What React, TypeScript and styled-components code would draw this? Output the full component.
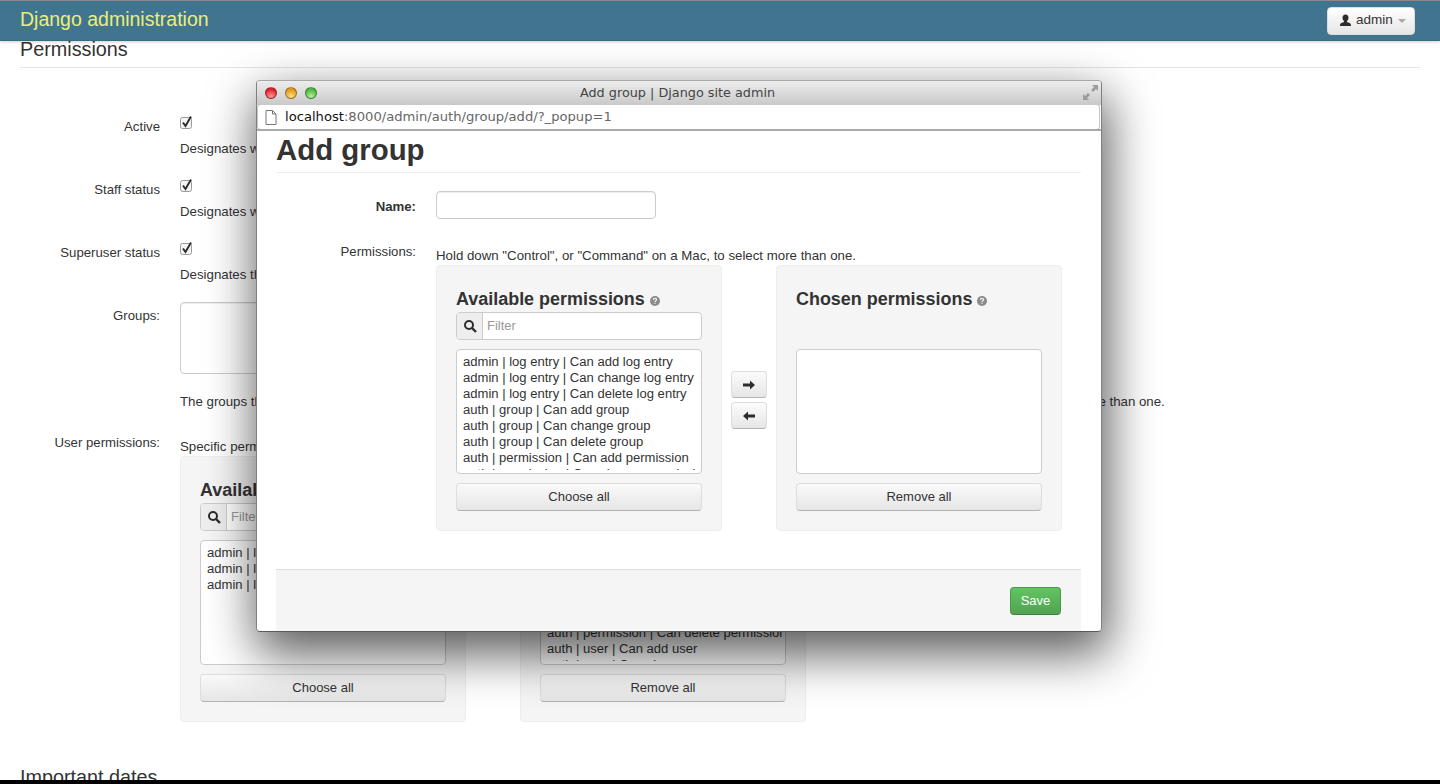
import {FC} from 'react'
import styled, {createGlobalStyle} from 'styled-components'

const GlobalStyle = createGlobalStyle`
  html, body {
    margin: 0;
    padding: 0;
    overflow: hidden;
    background: #fff;
  }
  * {
    box-sizing: border-box;
  }
`

const Viewport = styled.div`
  position: relative;
  width: 1440px;
  height: 784px;
  display: grid;
  grid-template-rows: 41px 1fr 4px;
  overflow: hidden;
  font-family: 'Liberation Sans', Arial, sans-serif;
  font-size: 13px;
  line-height: 20px;
  color: #333;
  background: #fff;
`

const TopBar = styled.header`
  position: relative;
  z-index: 2;
  display: flex;
  align-items: center;
  justify-content: space-between;
  padding: 0 25px 0 20px;
  background: #41758f;
  border-top: 1px solid #8a8a8a;
  border-bottom: 1px solid #3a6a82;
  box-shadow: 0 1px 3px rgba(0, 0, 0, 0.2);
`

const Brand = styled.div`
  font-size: 19.5px;
  line-height: 36px;
  padding-bottom: 4px;
  color: #e9ef78;
`

const UserButton = styled.div`
  display: flex;
  align-items: center;
  gap: 4px;
  width: 88px;
  height: 28px;
  padding: 0 0 1px 11px;
  font-size: 13.5px;
  color: #333;
  border-radius: 4px;
  border: 1px solid #d8dde0;
  background: linear-gradient(#fff, #e6e6e6);
`

const Caret = styled.span`
  width: 0;
  height: 0;
  margin: 2px 0 0 1px;
  border-left: 4px solid transparent;
  border-right: 4px solid transparent;
  border-top: 4px solid #aaa;
`

const Content = styled.main`
  padding: 0 20px;
  overflow: hidden;
`

const Legend = styled.div`
  font-size: 19.8px;
  line-height: 16px;
  padding-bottom: 10px;
  border-bottom: 1px solid #e5e5e5;
  color: #333;
`

const Form = styled.div`
  display: flex;
  flex-direction: column;
  gap: 17px;
  margin-top: 45px;
`

const Row = styled.div`
  display: grid;
  grid-template-columns: 140px 1fr;
  column-gap: 20px;
`

const Label = styled.div<{$bold?: boolean; $pad?: number}>`
  text-align: right;
  font-size: 13.2px;
  padding-top: ${p => p.$pad ?? 4}px;
  font-weight: ${p => (p.$bold ? 700 : 400)};
`

const Check = styled.div`
  height: 24px;
  padding-top: 2px;
`

const Help = styled.div<{$pad?: number; $tight?: boolean}>`
  font-size: 13.28px;
  padding-top: ${p => p.$pad ?? 2}px;
  margin-bottom: ${p => (p.$tight ? -1 : 0)}px;
  white-space: nowrap;
`

const MultiBox = styled.div`
  width: 220px;
  height: 72px;
  background: #fff;
  border: 1px solid #ccc;
  border-radius: 4px;
  box-shadow: inset 0 1px 1px rgba(0, 0, 0, 0.075);
`

const Selector = styled.div`
  display: flex;
`

const PanelBox = styled.section`
  width: 286px;
  height: 266px;
  padding: 0 19px;
  background: #f5f5f5;
  border: 1px solid #eee;
  border-radius: 4px;
`

const PanelTitle = styled.h3`
  display: flex;
  align-items: center;
  gap: 5px;
  margin: 0;
  height: 46px;
  padding-top: 20px;
  font-size: 17.95px;
  line-height: 26px;
  font-weight: 700;
  color: #333;

  svg {
    margin-top: 3px;
  }
`

const FilterSlot = styled.div`
  height: 28px;
  margin-bottom: 9px;
`

const FilterGroup = styled.div`
  display: flex;
  height: 28px;
  border: 1px solid #ccc;
  border-radius: 4px;
  background: #fff;
  overflow: hidden;
`

const FilterAddon = styled.div`
  display: flex;
  align-items: center;
  justify-content: center;
  width: 26px;
  background: #eee;
  border-right: 1px solid #ccc;
`

const FilterText = styled.div`
  padding-left: 4px;
  line-height: 25px;
  color: #999;
`

const ListBox = styled.div`
  width: 246px;
  height: 125px;
  padding: 4px 3px 3px 6px;
  background: #fff;
  border: 1px solid #ccc;
  border-radius: 4px;
`

const ListInner = styled.div`
  height: 100%;
  overflow: hidden;
`

const ListItem = styled.div`
  font-size: 13.05px;
  line-height: 16px;
  white-space: nowrap;
`

const WideButton = styled.div`
  display: flex;
  align-items: center;
  justify-content: center;
  width: 246px;
  height: 28px;
  margin-top: 9px;
  color: #333;
  background: linear-gradient(#fafafa, #e6e6e6);
  border: 1px solid #ddd;
  border-bottom-color: #b3b3b3;
  border-radius: 4px;
`

const Transfer = styled.div`
  display: flex;
  flex-direction: column;
  align-items: center;
  justify-content: center;
  gap: 4px;
  width: 54px;
  padding-top: 4px;
`

const ArrowButton = styled.div`
  display: flex;
  align-items: center;
  justify-content: center;
  width: 36px;
  height: 27px;
  background: linear-gradient(#fcfcfc, #e6e6e6);
  border: 1px solid #ddd;
  border-bottom-color: #b3b3b3;
  border-radius: 4px;
`

const NextSection = styled(Legend)`
  margin-top: 47px;
`

const BottomEdge = styled.div`
  background: #000;
`

const Popup = styled.div`
  position: absolute;
  z-index: 3;
  left: 256px;
  top: 80px;
  width: 846px;
  height: 552px;
  display: flex;
  flex-direction: column;
  background: #fff;
  border: 1px solid #808080;
  border-top-color: #a8a8a8;
  border-bottom-color: #5a5a5a;
  border-radius: 4px;
  overflow: hidden;
`

const PopupShadow = styled.div`
  position: absolute;
  z-index: 3;
  left: 256px;
  top: 80px;
  width: 846px;
  height: 552px;
  border-radius: 4px;
  box-shadow: 3px 18px 48px 2px rgba(0, 0, 0, 0.62), 4px 26px 60px rgba(0, 0, 0, 0.08);
`

const TitleBar = styled.div`
  position: relative;
  flex: none;
  display: flex;
  align-items: center;
  justify-content: center;
  height: 24px;
  padding: 0 3px 1px 0;
  font-family: 'DejaVu Sans', sans-serif;
  font-size: 12.8px;
  color: #444;
  background: linear-gradient(#ededed, #c9c9c9);
`

const Lights = styled.div`
  position: absolute;
  left: 8px;
  top: 6px;
  display: flex;
  gap: 8px;
`

const Light = styled.span<{$hue: string; $glow: string}>`
  width: 12px;
  height: 12px;
  border-radius: 50%;
  border: 1px solid rgba(0, 0, 0, 0.35);
  background: radial-gradient(circle at 50% 85%, ${p => p.$glow}, ${p => p.$hue} 70%);
`

const ExpandIcon = styled.svg`
  position: absolute;
  right: 3px;
  top: 4px;
`

const UrlBar = styled.div`
  flex: none;
  display: flex;
  align-items: center;
  gap: 8px;
  height: 24px;
  margin: 0 2px 0 1px;
  padding-left: 7px;
  font-family: 'DejaVu Sans', sans-serif;
  font-size: 13.14px;
  color: #666;
  background: #fff;
  border-radius: 3px;
  box-shadow: 0 0 0 1px #c4c4c4;
`

const Host = styled.span`
  color: #111;
`

const UrlEdge = styled.div`
  flex: none;
  height: 2px;
  background: #a9a9a9;
`

const PopupBody = styled.div`
  flex: 1;
  display: flex;
  flex-direction: column;
  padding: 0 20px 0 19px;
`

const PopupHeading = styled.h1`
  margin: 0;
  padding: 4px 0 7px;
  font-size: 29.4px;
  line-height: 30px;
  font-weight: 700;
  color: #333;
  border-bottom: 1px solid #eee;
`

const PopupForm = styled(Form)`
  gap: 19px;
  margin-top: 18px;
`

const TextField = styled.div`
  width: 220px;
  height: 28px;
  background: #fff;
  border: 1px solid #ccc;
  border-radius: 4px;
  box-shadow: inset 0 1px 1px rgba(0, 0, 0, 0.075);
`

const Footer = styled.footer`
  flex: 1;
  display: flex;
  align-items: flex-start;
  justify-content: flex-end;
  margin-top: 38px;
  padding: 17px 20px 0;
  background: #f5f5f5;
  border-top: 1px solid #ddd;
`

const SaveButton = styled.div`
  display: flex;
  align-items: center;
  justify-content: center;
  width: 51px;
  height: 28px;
  color: #fff;
  background: linear-gradient(#62c462, #51a351);
  border: 1px solid #4a974a;
  border-bottom-color: #3f7f3f;
  border-radius: 4px;
`

const CheckMark: FC = () => (
  <svg width="16" height="16" viewBox="0 0 16 16">
    <rect x="0.5" y="2.5" width="11" height="11" rx="2" fill="#f4f4f4" stroke="#9a9a9a" />
    <path d="M3 7.5 L5.5 11 L11 1.5" fill="none" stroke="#2c2c2c" strokeWidth="1.9" />
  </svg>
)

const UserIcon: FC = () => (
  <svg width="13" height="13" viewBox="0 0 13 13">
    <path
      d="M6.5 0.5c2 0 3 1.4 3 3.2 0 1.4-.7 2.6-1.5 3.2v1.2c1.6.5 4 1 4 3.1v.8H1v-.8c0-2.1 2.4-2.6 4-3.1V6.900c-.8-.6-1.500-1.800-1.500-3.200 0-1.800 1-3.200 3-3.200z"
      fill="#2d2d2d"
    />
  </svg>
)

const SearchIcon: FC = () => (
  <svg width="14" height="14" viewBox="0 0 14 14">
    <circle cx="6" cy="6" r="4" fill="none" stroke="#2d2d2d" strokeWidth="2" />
    <path d="M9 9 L13 13" stroke="#2d2d2d" strokeWidth="2.4" />
  </svg>
)

const HelpIcon: FC = () => (
  <svg width="10" height="10" viewBox="0 0 10 10">
    <circle cx="5" cy="5" r="5" fill="#8a8a8a" />
    <path
      d="M3.400 3.900c0-1 .7-1.500 1.600-1.500s1.600.5 1.600 1.300c0 1.100-1.600 1.100-1.600 2.200"
      fill="none"
      stroke="#f5f5f5"
      strokeWidth="1.100"
    />
    <rect x="4.400" y="6.700" width="1.200" height="1.200" fill="#f5f5f5" />
  </svg>
)

const ArrowIcon: FC<{left?: boolean}> = ({left}) => (
  <svg width="12" height="10" viewBox="0 0 12 10">
    <path
      d={left ? 'M0 5 L5 0.500 V3.500 H12 V6.500 H5 V9.500 Z' : 'M12 5 L7 0.500 V3.500 H0 V6.500 H7 V9.500 Z'}
      fill="#2d2d2d"
    />
  </svg>
)

const PageIcon: FC = () => (
  <svg width="12" height="15" viewBox="0 0 12 15">
    <path d="M1 .5 H7.500 L11 4 V14.500 H1 Z M7.500 .5 V4 H11" fill="#fff" stroke="#777" />
  </svg>
)

const panelItems = {
  admin: ['admin | log entry | Can add log entry', 'admin | log entry | Can change log entry', 'admin | log entry | Can delete log entry'],
  group: ['auth | group | Can add group', 'auth | group | Can change group', 'auth | group | Can delete group'],
  perm: ['auth | permission | Can add permission', 'auth | permission | Can change permission', 'auth | permission | Can delete permission'],
  user: ['auth | user | Can add user', 'auth | user | Can change user', 'auth | user | Can delete user'],
}

const Panel: FC<{title: string; items: string[]; action: string; filter?: boolean}> = ({title, items, action, filter}) => (
  <PanelBox>
    <PanelTitle>
      {title} <HelpIcon />
    </PanelTitle>
    <FilterSlot>
      {filter && (
        <FilterGroup>
          <FilterAddon>
            <SearchIcon />
          </FilterAddon>
          <FilterText>Filter</FilterText>
        </FilterGroup>
      )}
    </FilterSlot>
    <ListBox>
      <ListInner>
        {items.map(item => (
          <ListItem key={item}>{item}</ListItem>
        ))}
      </ListInner>
    </ListBox>
    <WideButton>{action}</WideButton>
  </PanelBox>
)

const PermissionSelector: FC<{available: string[]; chosen: string[]}> = ({available, chosen}) => (
  <Selector>
    <Panel title="Available permissions" items={available} action="Choose all" filter />
    <Transfer>
      <ArrowButton>
        <ArrowIcon />
      </ArrowButton>
      <ArrowButton>
        <ArrowIcon left />
      </ArrowButton>
    </Transfer>
    <Panel title="Chosen permissions" items={chosen} action="Remove all" />
  </Selector>
)

const HOLD_DOWN = 'Hold down "Control", or "Command" on a Mac, to select more than one.'

const checkRows = [
  ['Active', 'Designates whether this user should be treated as active. Unselect this instead of deleting accounts.'],
  ['Staff status', 'Designates whether the user can log into this admin site.'],
  ['Superuser status', 'Designates that this user has all permissions without explicitly assigning them.'],
]

const App: FC = () => (
  <Viewport>
    <GlobalStyle />
    <TopBar>
      <Brand>Django administration</Brand>
      <UserButton>
        <UserIcon />
        admin
        <Caret />
      </UserButton>
    </TopBar>

    <Content>
      <Legend>Permissions</Legend>
      <Form>
        {checkRows.map(([label, help]) => (
          <Row key={label}>
            <Label>{label}</Label>
            <div>
              <Check>
                <CheckMark />
              </Check>
              <Help>{help}</Help>
            </div>
          </Row>
        ))}
        <Row>
          <Label>Groups:</Label>
          <div>
            <MultiBox />
            <Help $pad={18}>The groups this user belongs to. A user will get all permissions granted to each of his/her group. {HOLD_DOWN}</Help>
          </div>
        </Row>
        <Row>
          <Label>User permissions:</Label>
          <div>
            <Help $pad={8} $tight>Specific permissions for this user. {HOLD_DOWN}</Help>
            <PermissionSelector
              available={panelItems.admin}
              chosen={[...panelItems.group, ...panelItems.perm, ...panelItems.user]}
            />
          </div>
        </Row>
      </Form>
      <NextSection>Important dates</NextSection>
    </Content>

    <BottomEdge />

    <PopupShadow />
    <Popup>
      <TitleBar>
        <Lights>
          <Light $hue="#e2222c" $glow="#ff9a94" />
          <Light $hue="#e39a1c" $glow="#ffdf85" />
          <Light $hue="#4fb83c" $glow="#b8f0a0" />
        </Lights>
        Add group | Django site admin
        <ExpandIcon width="15" height="15" viewBox="0 0 15 15">
          <path d="M15 0 H9 L11 2 L8 5 L10 7 L13 4 L15 6 Z M0 15 H6 L4 13 L7 10 L5 8 L2 11 L0 9 Z" fill="#9c9c9c" />
        </ExpandIcon>
      </TitleBar>
      <UrlBar>
        <PageIcon />
        <span>
          <Host>localhost</Host>:8000/admin/auth/group/add/?_popup=1
        </span>
      </UrlBar>
      <UrlEdge />
      <PopupBody>
        <PopupHeading>Add group</PopupHeading>
        <PopupForm>
          <Row>
            <Label $bold $pad={6}>Name:</Label>
            <TextField />
          </Row>
          <Row>
            <Label>Permissions:</Label>
            <div>
              <Help $pad={8} $tight>{HOLD_DOWN}</Help>
              <PermissionSelector
                available={[...panelItems.admin, ...panelItems.group, ...panelItems.perm]}
                chosen={[]}
              />
            </div>
          </Row>
        </PopupForm>
        <Footer>
          <SaveButton>Save</SaveButton>
        </Footer>
      </PopupBody>
    </Popup>
  </Viewport>
)

export default App
